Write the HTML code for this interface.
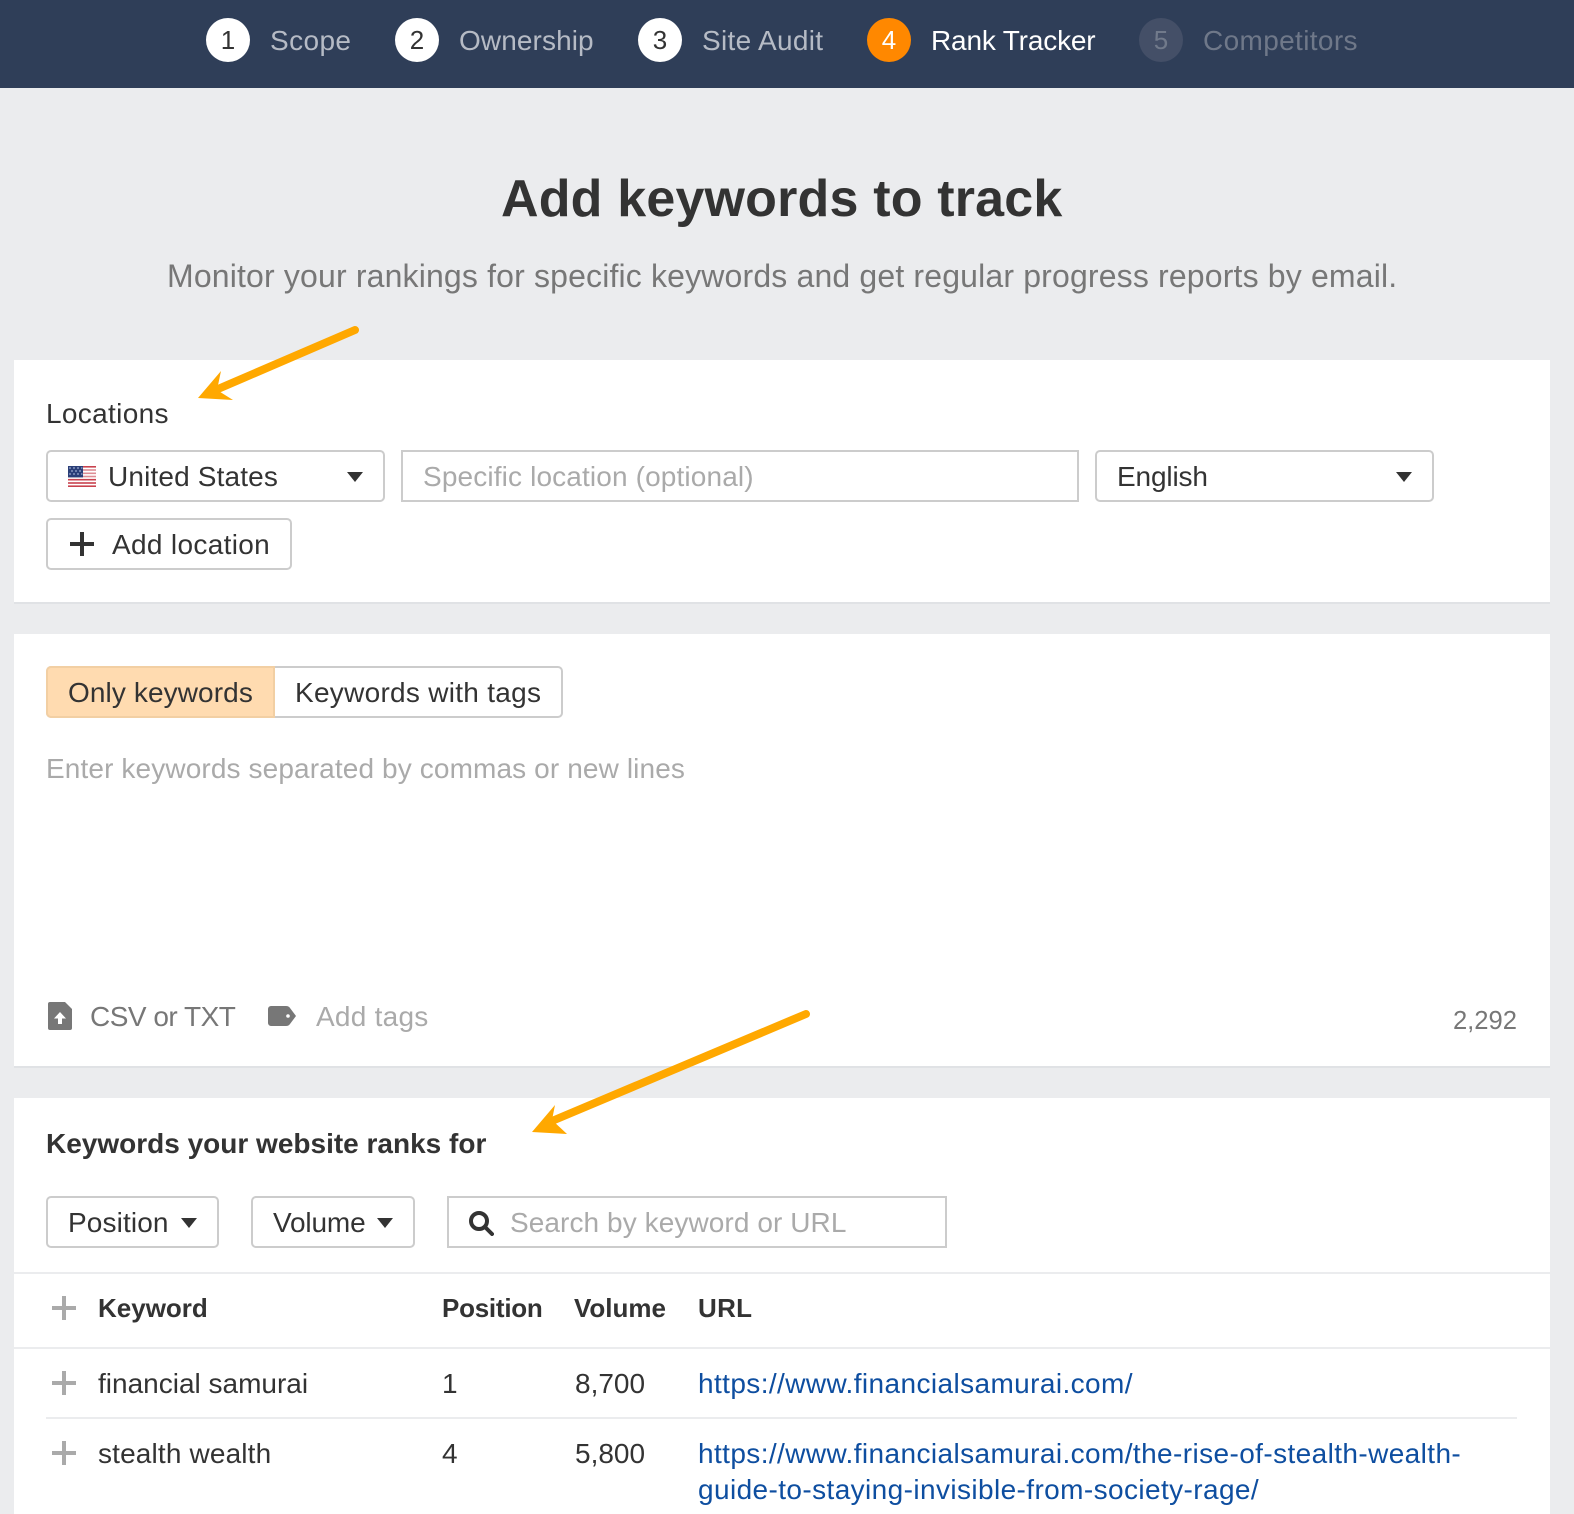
<!DOCTYPE html>
<html lang="en">
<head>
<meta charset="utf-8">
<title>Add keywords to track</title>
<style>
html,body{margin:0;padding:0;}
body{width:1574px;height:1514px;position:relative;overflow:hidden;background:#ebecee;font-family:"Liberation Sans",Arial,sans-serif;color:#333;font-size:28px;}
.t{position:absolute;line-height:40px;white-space:nowrap;font-size:28px;}
.hdr{position:absolute;left:0;top:0;width:1574px;height:88px;background:#2f3e58;}
.c{position:absolute;top:18px;width:44px;height:44px;border-radius:50%;background:#fff;color:#333;font-size:26px;line-height:44px;text-align:center;}
.s{top:21px;color:#b6bbc5;}
.card{position:absolute;left:14px;width:1536px;background:#fff;box-shadow:0 2px 0 #e0e2e5;}
.box{position:absolute;box-sizing:border-box;border:2px solid #ccc;background:#fff;border-radius:5px;}
.sq{border-radius:0;}
.ph{color:#aaa;}
.car{position:absolute;width:0;height:0;border-left:8px solid transparent;border-right:8px solid transparent;border-top:10px solid #333;}
.p{position:absolute;width:24px;height:24px;background:
 linear-gradient(#aaa,#aaa) center/100% 4px no-repeat,
 linear-gradient(#aaa,#aaa) center/4px 100% no-repeat;}
.ln{position:absolute;height:2px;background:#ebecee;}
b.t{font-weight:700;}
.th{font-size:26px;}
a.t{color:#0e4ea0;text-decoration:none;letter-spacing:.4px;}
</style>
</head>
<body>
<div class="hdr"></div>
<div class="c" style="left:206px">1</div><div class="t s" style="left:270px;letter-spacing:.4px">Scope</div>
<div class="c" style="left:395px">2</div><div class="t s" style="left:459px;letter-spacing:.1px">Ownership</div>
<div class="c" style="left:638px">3</div><div class="t s" style="left:702px;letter-spacing:.3px">Site Audit</div>
<div class="c" style="left:867px;background:#ff8800;color:#fff">4</div><div class="t s" style="left:931px;color:#fff;letter-spacing:-.17px">Rank Tracker</div>
<div class="c" style="left:1139px;background:#444f67;color:#717a8b">5</div><div class="t s" style="left:1203px;color:#6f7889;letter-spacing:.36px">Competitors</div>

<b class="t" style="left:501px;top:169px;font-size:52px;line-height:60px;color:#333;letter-spacing:.18px">Add keywords to track</b>
<div class="t" style="left:167px;top:256px;font-size:32px;color:#777;letter-spacing:.16px">Monitor your rankings for specific keywords and get regular progress reports by email.</div>

<div class="card" style="top:360px;height:242px"></div>
<div class="t" style="left:46px;top:394px;letter-spacing:.33px">Locations</div>
<div class="box" style="left:46px;top:450px;width:339px;height:52px"></div>
<svg style="position:absolute;left:68px;top:466px" width="28" height="21" viewBox="0 0 28 21">
<rect width="28" height="21" fill="#fff"/>
<g fill="#c8424e"><rect y="0" width="28" height="1.6"/><rect y="3.2" width="28" height="1.6" opacity=".6"/><rect y="6.5" width="28" height="1.6" opacity=".6"/><rect y="9.7" width="28" height="1.6" opacity=".6"/><rect y="12.9" width="28" height="1.6"/><rect y="16.2" width="28" height="1.6"/><rect y="19.4" width="28" height="1.6"/></g>
<rect width="15" height="11.4" fill="#2b3f78"/>
<g fill="#6f80ad"><rect x="1" y="1" width="2" height="2"/><rect x="5" y="1" width="2" height="2"/><rect x="9" y="1" width="2" height="2"/><rect x="13" y="1" width="1.5" height="2"/><rect x="3" y="4" width="2" height="2"/><rect x="7" y="4" width="2" height="2"/><rect x="11" y="4" width="2" height="2"/><rect x="1" y="7" width="2" height="2"/><rect x="5" y="7" width="2" height="2"/><rect x="9" y="7" width="2" height="2"/><rect x="13" y="7" width="1.5" height="2"/></g>
</svg>
<div class="t" style="left:108px;top:457px;letter-spacing:.15px">United States</div>
<div class="car" style="left:347px;top:472px"></div>
<div class="box sq" style="left:401px;top:450px;width:678px;height:52px"></div>
<div class="t ph" style="left:423px;top:457px;letter-spacing:.14px">Specific location (optional)</div>
<div class="box" style="left:1095px;top:450px;width:339px;height:52px"></div>
<div class="t" style="left:1117px;top:457px;letter-spacing:-.14px">English</div>
<div class="car" style="left:1396px;top:472px"></div>
<div class="box" style="left:46px;top:518px;width:246px;height:52px"></div>
<div style="position:absolute;left:70px;top:532px;width:24px;height:24px;background:linear-gradient(#333,#333) center/100% 4px no-repeat,linear-gradient(#333,#333) center/4px 100% no-repeat"></div>
<div class="t" style="left:112px;top:525px;letter-spacing:.33px">Add location</div>

<div class="card" style="top:634px;height:432px"></div>
<div class="box" style="left:46px;top:666px;width:517px;height:52px"></div>
<div style="position:absolute;box-sizing:border-box;left:46px;top:666px;width:229px;height:52px;background:#ffdbb0;border:2px solid #f2cfa3;border-radius:5px 0 0 5px"></div>
<div class="t" style="left:68px;top:673px;letter-spacing:.1px">Only keywords</div>
<div class="t" style="left:295px;top:673px;letter-spacing:.28px">Keywords with tags</div>
<div class="t ph" style="left:46px;top:749px;letter-spacing:.12px">Enter keywords separated by commas or new lines</div>

<svg style="position:absolute;left:48px;top:1002px" width="24" height="28" viewBox="0 0 24 28">
<path d="M2 0H17L24 7V26a2 2 0 0 1-2 2H2a2 2 0 0 1-2-2V2a2 2 0 0 1 2-2Z" fill="#777"/>
<path d="M12 10L18 16.5H14V22H10V16.5H6Z" fill="#fff"/>
</svg>
<div class="t" style="left:90px;top:997px;color:#777;letter-spacing:-.5px">CSV or TXT</div>
<svg style="position:absolute;left:268px;top:1006px" width="28" height="20" viewBox="0 0 28 20">
<path d="M3 0H18C20 0 21 .8 22 2L28 10L22 18C21 19.2 20 20 18 20H3a3 3 0 0 1-3-3V3a3 3 0 0 1 3-3Z" fill="#777"/>
<circle cx="20" cy="10" r="1.8" fill="#fff"/>
</svg>
<div class="t ph" style="left:316px;top:997px;letter-spacing:.25px">Add tags</div>
<div class="t" style="right:57px;top:1001px;font-size:25.6px;color:#777">2,292</div>

<div class="card" style="top:1098px;height:416px;box-shadow:none"></div>
<b class="t" style="left:46px;top:1124px">Keywords your website ranks for</b>
<div class="box" style="left:46px;top:1196px;width:173px;height:52px"></div>
<div class="t" style="left:68px;top:1203px;letter-spacing:.12px">Position</div>
<div class="car" style="left:181px;top:1218px"></div>
<div class="box" style="left:251px;top:1196px;width:164px;height:52px"></div>
<div class="t" style="left:273px;top:1203px;letter-spacing:-.15px">Volume</div>
<div class="car" style="left:377px;top:1218px"></div>
<div class="box sq" style="left:447px;top:1196px;width:500px;height:52px"></div>
<svg style="position:absolute;left:469px;top:1211px" width="25" height="25" viewBox="0 0 25 25">
<circle cx="10" cy="10" r="8" fill="none" stroke="#333" stroke-width="4"/>
<path d="M16 16L23 23" stroke="#333" stroke-width="4" stroke-linecap="round"/>
</svg>
<div class="t ph" style="left:510px;top:1203px;letter-spacing:.08px">Search by keyword or URL</div>

<div class="ln" style="left:14px;top:1272px;width:1536px"></div>
<div class="p" style="left:52px;top:1296px"></div>
<b class="t th" style="left:98px;top:1288px">Keyword</b>
<b class="t th" style="left:442px;top:1288px;letter-spacing:-.25px">Position</b>
<b class="t th" style="left:574px;top:1288px">Volume</b>
<b class="t th" style="left:698px;top:1288px;letter-spacing:.3px">URL</b>
<div class="ln" style="left:14px;top:1347px;width:1536px"></div>

<div class="p" style="left:52px;top:1371px"></div>
<div class="t" style="left:98px;top:1364px">financial samurai</div>
<div class="t" style="left:442px;top:1364px">1</div>
<div class="t" style="left:575px;top:1364px">8,700</div>
<a class="t" style="left:698px;top:1364px">https://www.financialsamurai.com/</a>
<div class="ln" style="left:46px;top:1417px;width:1471px"></div>

<div class="p" style="left:52px;top:1441px"></div>
<div class="t" style="left:98px;top:1434px;letter-spacing:.15px">stealth wealth</div>
<div class="t" style="left:442px;top:1434px">4</div>
<div class="t" style="left:575px;top:1434px">5,800</div>
<a class="t" style="left:698px;top:1434px">https://www.financialsamurai.com/the-rise-of-stealth-wealth-</a>
<a class="t" style="left:698px;top:1470px">guide-to-staying-invisible-from-society-rage/</a>

<svg style="position:absolute;left:0;top:0;pointer-events:none" width="1574" height="1514" viewBox="0 0 1574 1514">
<path d="M355 330L218 389" stroke="#ffa800" stroke-width="8" stroke-linecap="round" fill="none"/>
<path d="M198 398L221 371L217 390L233 400Z" fill="#ffa800"/>
<path d="M806 1014L552 1121" stroke="#ffa800" stroke-width="8" stroke-linecap="round" fill="none"/>
<path d="M532 1132L555 1105L552 1120L567 1134Z" fill="#ffa800"/>
</svg>
</body>
</html>
